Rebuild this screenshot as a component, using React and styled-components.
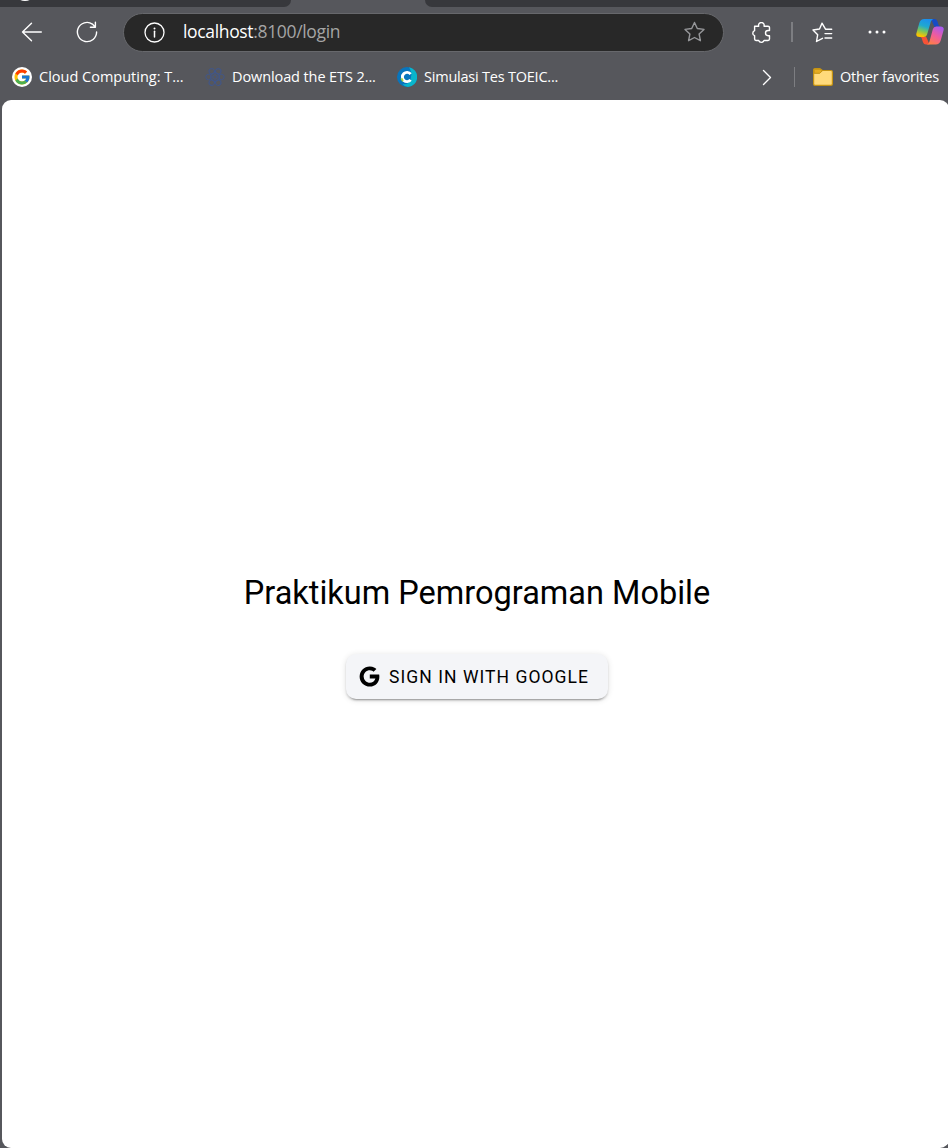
import React from "react";
import styled, { createGlobalStyle } from "styled-components";
import { IoLogoGoogle } from "react-icons/io5";
import { FcGoogle } from "react-icons/fc";

const GlobalStyle = createGlobalStyle`
  * { box-sizing: border-box; }
  body { margin: 0; background: #56575c; overflow: hidden; }
`;

const Browser = styled.div`
  display: flex;
  flex-direction: column;
  width: 948px;
  height: 1148px;
  overflow: hidden;
  background: #56575c;
  font-family: "Open Sans", "Noto Sans", sans-serif;
  color: #fff;
  svg { display: block; flex: none; }
`;

const TabStrip = styled.div`
  display: flex;
  justify-content: space-between;
  height: 7px;
  flex: none;
`;

const TabGroup = styled.div`
  width: ${(p) => p.$width}px;
  background: #37383c;
  border-radius: ${(p) => (p.$end ? "0 0 0 8px" : "0 0 8px 0")};
  padding-left: ${(p) => (p.$end ? 0 : 18)}px;
  overflow: hidden;
`;

const Toolbar = styled.div`
  display: flex;
  align-items: center;
  height: 50px;
  flex: none;
  padding-left: 21px;
`;

const Slot = styled.div`
  flex: none;
  width: ${(p) => p.$width}px;
  padding-top: ${(p) => p.$drop || 0}px;
`;

const AddressBar = styled.div`
  display: flex;
  align-items: center;
  width: 601px;
  height: 39px;
  padding: 0 18px 0 20px;
  margin-right: 27px;
  flex: none;
  background: #282828;
  border: 1px solid #67686c;
  border-radius: 20px;
`;

const Url = styled.div`
  flex: 1;
  margin: -2px 0 0 18px;
  font-size: 17.5px;
  line-height: 24px;
  letter-spacing: -0.34px;
  white-space: nowrap;
  span { color: #a5a5a5; }
`;

const Divider = styled.div`
  width: ${(p) => p.$width || 1}px;
  height: 20px;
  flex: none;
  background: #7d7e82;
  margin-right: ${(p) => p.$gap}px;
`;

const Bookmarks = styled.div`
  display: flex;
  align-items: center;
  height: 42px;
  flex: none;
  padding: 0 0 2px 12px;
`;

const Bookmark = styled.div`
  display: flex;
  align-items: center;
  gap: 7px;
  width: ${(p) => p.$width}px;
  flex: none;
`;

const Label = styled.span`
  font-size: 14.5px;
  line-height: 20px;
  letter-spacing: ${(p) => p.$track}px;
  white-space: nowrap;
`;

const Spacer = styled.div`
  flex: 1;
`;

const Page = styled.main`
  display: flex;
  flex-direction: column;
  align-items: center;
  flex: 1;
  margin: 1px -1px 0 2px;
  padding-top: 471px;
  background: #fff;
  border-radius: 9px;
  font-family: Roboto, sans-serif;
  color: #000;
`;

const Title = styled.h1`
  margin: 0 0 32px;
  padding-left: 3px;
  font-size: 32.5px;
  line-height: 44px;
  font-weight: 400;
  white-space: nowrap;
`;

const SignInButton = styled.button`
  display: flex;
  align-items: center;
  justify-content: flex-start;
  gap: 8px;
  width: 262px;
  height: 45px;
  margin: 7px 0 0 3px;
  padding: 1px 0 0 12px;
  border: 0;
  border-radius: 10px;
  background: #f4f5f8;
  color: #000;
  font: 400 17.5px/24px Roboto, sans-serif;
  letter-spacing: 1.05px;
  white-space: nowrap;
  svg { margin-bottom: 2px; }
  box-shadow: 0 4px 1px -3px rgba(0, 0, 0, 0.2), 0 2px 2px rgba(0, 0, 0, 0.14),
    0 1px 6px rgba(0, 0, 0, 0.12);
`;

const line = { fill: "none", stroke: "#fff", strokeLinecap: "round", strokeLinejoin: "round" };

const BackIcon = () => (
  <svg width="22" height="22" viewBox="0 0 22 22" {...line} strokeWidth="1.4">
    <path d="M20.3 11H1.5M10.5 2.3L1.5 11l9 8.7" />
  </svg>
);

const ReloadIcon = () => (
  <svg width="22" height="22" viewBox="0 0 22 22" {...line} strokeWidth="1.4">
    <path d="M20.6 11a9.6 9.6 0 1 1-4.2-7.9L19.2 6M19.4 1.3V6.2H14.4" />
  </svg>
);

const InfoIcon = () => (
  <svg width="21" height="21" viewBox="0 0 21 21" {...line} strokeWidth="1.3">
    <circle cx="10.5" cy="10.5" r="9.5" />
    <path d="M10.5 9.3v5.6" strokeWidth="1.5" />
    <circle cx="10.5" cy="6.4" r="1" fill="#fff" stroke="none" />
  </svg>
);

const StarIcon = () => (
  <svg width="22" height="22" viewBox="0 0 22 22" {...line} stroke="#96979a" strokeWidth="1.4">
    <path d="M11.5 1.5l2.8 6 6.7.9-4.9 4.6 1.3 6.7-5.9-3.2-5.9 3.2L6.9 13 2 8.4l6.7-.9z" />
  </svg>
);

const PuzzleIcon = () => (
  <svg width="20" height="22" viewBox="0 0 20 22" {...line} strokeWidth="1.4">
    <path d="M3.6 4.2h4.1a2.8 2.8 0 1 1 5.3 0h4q1.5 0 1.5 1.4v2.9h-1.4a2.6 2.6 0 0 0 0 5.2h1.4v3.4q0 1.4-1.5 1.4h-4a2.8 2.8 0 0 1-5.3 0H5q-1.4 0-1.4-1.4v-3.4a2.7 2.7 0 0 1 0-5.1z" />
  </svg>
);

const FavoritesIcon = () => (
  <svg width="21" height="21" viewBox="0 0 21 21" {...line} strokeWidth="1.4">
    <path d="M19.7 7.2h-6.2L10 1.2 7.5 7 1 8l4.7 4.7L4.5 19.5l6-3.2M13 11.6h6.7M13 16h6.7" />
  </svg>
);

const MoreIcon = () => (
  <svg width="18" height="4" viewBox="0 0 18 4" fill="#fff">
    <circle cx="2" cy="2" r="1.5" />
    <circle cx="9" cy="2" r="1.5" />
    <circle cx="16" cy="2" r="1.5" />
  </svg>
);

const CopilotIcon = () => (
  <svg width="28" height="28" viewBox="0 0 28 28">
    <defs>
      <linearGradient id="cpLeft" x1="0.6" y1="0" x2="0.3" y2="1">
        <stop offset="0" stopColor="#1b8fee" />
        <stop offset="0.4" stopColor="#20a9cf" />
        <stop offset="0.68" stopColor="#7cc65a" />
        <stop offset="0.95" stopColor="#fbc400" />
      </linearGradient>
      <linearGradient id="cpRight" x1="0.8" y1="0" x2="0.25" y2="1">
        <stop offset="0" stopColor="#a65af2" />
        <stop offset="0.5" stopColor="#ef5c9d" />
        <stop offset="1" stopColor="#ff7f46" />
      </linearGradient>
    </defs>
    <path d="M15 1h3.4q2.4 0 3.1 2.4l1.1 3.7q.5 1.6 2 1.6h-6.2z" fill="#174bc5" />
    <path d="M13.5 26.5H10q-2.3 0-3-2.2l-1.3-4q-.5-1.3-1.8-1.3h6.4z" fill="#f65236" />
    <path d="M8.3 1h9.1q-1.9.4-2.6 2.8l-3.7 12.7q-.7 2.5-3.4 2.5H3.6q-4.2 0-3.1-4L3.3 5Q4.5 1 8.3 1z" fill="url(#cpLeft)" />
    <path d="M19.7 26.5h-9q2-.4 2.7-2.8l3.5-12.6q.7-2.5 3.5-2.5h4q4.2 0 3.1 4l-2.8 9.9q-1.2 4-5 4z" fill="url(#cpRight)" />
  </svg>
);

const GoogleFavicon = styled.div`
  display: grid;
  place-items: center;
  width: 20px;
  height: 20px;
  border-radius: 50%;
  background: #fff;
`;

const AtomIcon = () => (
  <svg width="20" height="20" viewBox="0 0 20 20" fill="none" stroke="#40568a" strokeWidth="0.95">
    {[0, 60, 120, 180, 240, 300].map((a) => (
      <circle key={a} cx="10" cy="3.5" r="2.7" transform={`rotate(${a + 30} 10 10)`} />
    ))}
    <circle cx="10" cy="10" r="2.2" />
    <circle cx="10" cy="10" r="4.3" />
  </svg>
);

const CourseIcon = () => (
  <svg width="20" height="20" viewBox="0 0 20 20" fill="none">
    <circle cx="10" cy="10" r="10" fill="#0875bd" />
    <path d="M12 .2A10 10 0 0 1 11 20q-4-.5-5.5-3 6 1 8-4l1-6Q14 3 12 .2z" fill="#08b5cc" />
    <path d="M13.6 7.1a4.6 4.6 0 1 0 0 5.8" stroke="#fff" strokeWidth="2.9" />
    <path d="M3.5 11.5l2.2-.2.9 2.5-1.4.9z" fill="#a9d63b" />
  </svg>
);

const ChevronIcon = () => (
  <svg width="10" height="17" viewBox="0 0 10 17" {...line} strokeWidth="1.4">
    <path d="M1.5 1.5L8.5 8.5l-7 7" />
  </svg>
);

const FolderIcon = () => (
  <svg width="20" height="18" viewBox="0 0 20 18" stroke="#c59312" strokeLinejoin="round">
    <path d="M.6 16V2Q.6.7 2 .7h5l2.4 1.8H18q1.4 0 1.4 1.4V16q0 1.3-1.4 1.3H2Q.6 17.3.6 16z" fill="#ffda7b" strokeWidth="1.2" />
    <path d="M1.2 5.3h5.6l2.6-2.6L7 1.3H2q-.8 0-.8.8z" fill="#e5ac21" strokeWidth="1" />
  </svg>
);

export default function App() {
  return (
    <Browser>
      <GlobalStyle />
      <TabStrip>
        <TabGroup $width={291}>
          <svg width="14" height="7" viewBox="0 0 14 7"><ellipse cx="7" cy="-3" rx="7" ry="4" fill="#fff" /></svg>
        </TabGroup>
        <TabGroup $width={523} $end />
      </TabStrip>
      <Toolbar>
        <Slot $width={55}><BackIcon /></Slot>
        <Slot $width={47}><ReloadIcon /></Slot>
        <AddressBar>
          <InfoIcon />
          <Url>localhost<span>:8100/login</span></Url>
          <StarIcon />
        </AddressBar>
        <Slot $width={40} $drop={2}><PuzzleIcon /></Slot>
        <Divider $width={2} $gap={19} />
        <Slot $width={56} $drop={1}><FavoritesIcon /></Slot>
        <Slot $width={48}><MoreIcon /></Slot>
        <CopilotIcon />
      </Toolbar>
      <Bookmarks>
        <Bookmark $width={193}>
          <GoogleFavicon><FcGoogle size={18} /></GoogleFavicon>
          <Label $track={0}>Cloud Computing: T...</Label>
        </Bookmark>
        <Bookmark $width={192}>
          <AtomIcon />
          <Label $track={-0.1}>Download the ETS 2...</Label>
        </Bookmark>
        <Bookmark $width={180}>
          <CourseIcon />
          <Label $track={-0.22}>Simulasi Tes TOEIC...</Label>
        </Bookmark>
        <Spacer />
        <Slot $width={32}><ChevronIcon /></Slot>
        <Divider $gap={18} />
        <Bookmark $width={135}>
          <FolderIcon />
          <Label $track={-0.2}>Other favorites</Label>
        </Bookmark>
      </Bookmarks>
      <Page>
        <Title>Praktikum Pemrograman Mobile</Title>
        <SignInButton>
          <IoLogoGoogle size={23} />
          SIGN IN WITH GOOGLE
        </SignInButton>
      </Page>
    </Browser>
  );
}
